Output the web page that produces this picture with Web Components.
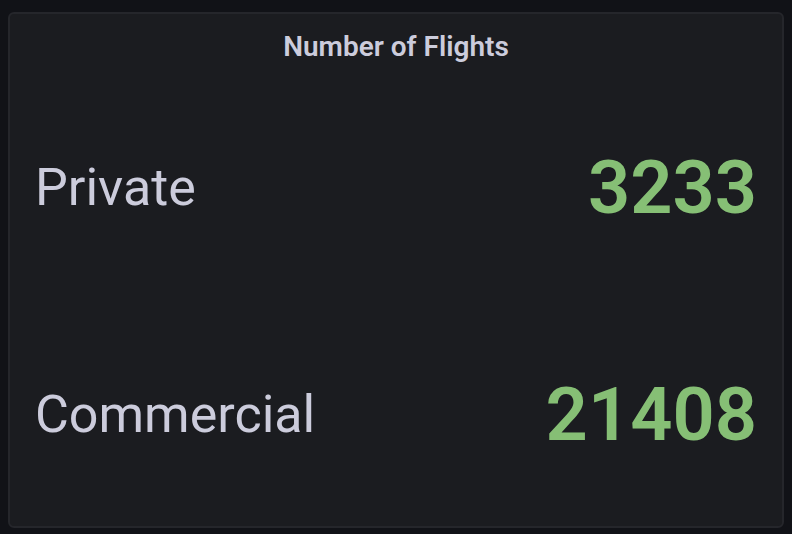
<!DOCTYPE html>
<html lang="en">
<head>
<meta charset="utf-8">
<title>Number of Flights</title>
<style>
html, body { height: 100%; }
body { margin: 0; background: #111217; color: #ccccdc; font-family: Roboto, "Liberation Sans", sans-serif; }
</style>
</head>
<body>
<stat-panel>
  <span slot="title">Number of Flights</span>
  <stat-row><span slot="label">Private</span>3233</stat-row>
  <stat-row><span slot="label">Commercial</span>21408</stat-row>
</stat-panel>
<script>
class StatPanel extends HTMLElement {
  constructor() {
    super();
    this.attachShadow({ mode: "open" }).innerHTML = `
      <style>
        :host { display: flex; box-sizing: border-box; min-height: 100vh; padding: 12px 8px 6px; }
        section { flex: 1; display: flex; flex-direction: column; background: #1b1c20; border: 2px solid #25262b; border-radius: 6px; }
        h2 { margin: 0; padding-top: 17px; font-size: 28px; line-height: 32px; font-weight: 600; text-align: center; }
        .rows { flex: 1; display: grid; grid-auto-rows: 1fr; gap: 4px; padding: 14px 25px 0; }
      </style>
      <section>
        <h2><slot name="title"></slot></h2>
        <div class="rows"><slot></slot></div>
      </section>`;
  }
}
class StatRow extends HTMLElement {
  constructor() {
    super();
    this.attachShadow({ mode: "open" }).innerHTML = `
      <style>
        :host { display: flex; align-items: center; justify-content: space-between; gap: 16px; line-height: 88px; }
        .label { font-size: 52px; font-weight: 450; }
        .value { font-size: 74px; font-weight: 600; color: #86bf75; }
      </style>
      <div class="label"><slot name="label"></slot></div>
      <div class="value"><slot></slot></div>`;
  }
}
customElements.define("stat-panel", StatPanel);
customElements.define("stat-row", StatRow);
</script>
</body>
</html>
